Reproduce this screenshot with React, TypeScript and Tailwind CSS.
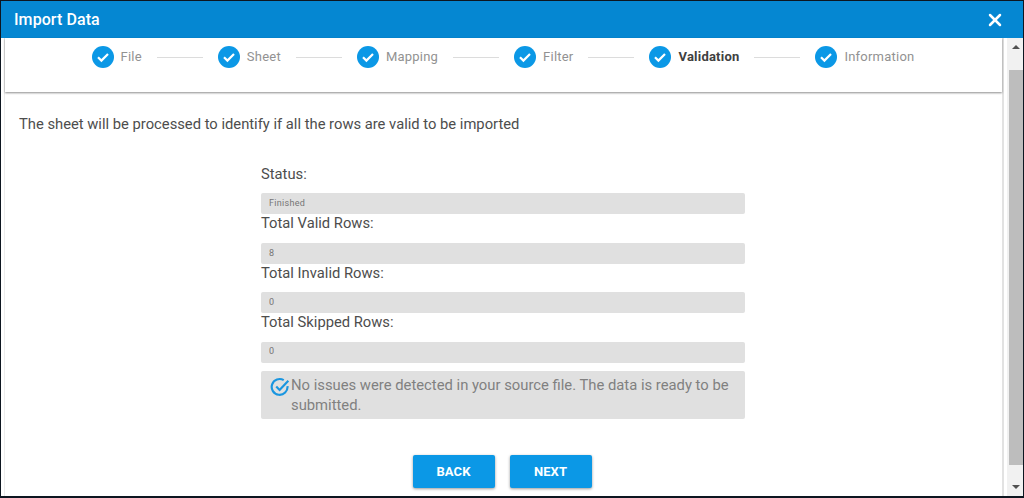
import React from "react";
import { X } from "lucide-react";

const steps = ["File", "Sheet", "Mapping", "Filter", "Validation", "Information"];

const fields = [
  { label: "Status:", value: "Finished" },
  { label: "Total Valid Rows:", value: "8" },
  { label: "Total Invalid Rows:", value: "0" },
  { label: "Total Skipped Rows:", value: "0" },
];

function StepIcon() {
  return (
    <svg viewBox="0 0 22 22" className="w-[22px] h-[22px] shrink-0">
      <circle cx="11" cy="11" r="11" fill="#0b98e6" />
      <path d="M6 11.3l3.4 3.3L16 8" fill="none" stroke="#fff" strokeWidth="2.2" />
    </svg>
  );
}

export default function App() {
  return (
    <div className="w-[1024px] h-[498px] bg-[#0d1620] pt-px pl-px pr-px pb-[2px] overflow-hidden font-['Roboto',sans-serif]">
      <div className="w-full h-full bg-white flex flex-col">
        <div className="h-[37px] shrink-0 bg-[#0587d2] text-white flex items-center justify-between pl-[13px] pr-[18px]">
          <span className="text-[16px] tracking-[0.08px] font-medium">Import Data</span>
          <X size={20} strokeWidth={3} />
        </div>
        <div className="flex flex-1 min-h-0 pl-[3px]">
          <div className="flex-1 min-w-0 flex flex-col border-l border-r-2 border-l-[#ececec] border-r-[#e2e2e2]">
            <div className="h-[54px] shrink-0 bg-white shadow-[0_1px_2px_rgba(0,0,0,0.45)] flex justify-center pt-[8px] pr-px">
              <div className="flex items-start">
                {steps.map((s, i) => (
                  <div key={s} className="flex items-center h-[22px]">
                    <StepIcon />
                    <span
                      className={
                        "ml-[7px] text-[13px] tracking-[0.22px] " +
                        (s === "Validation" ? "font-bold text-[#404040]" : "text-[#929292]")
                      }
                    >
                      {s}
                    </span>
                    {i < steps.length - 1 && (
                      <div className="w-[46px] h-px bg-[#dcdcdc] mx-[15px]" />
                    )}
                  </div>
                ))}
              </div>
            </div>
            <div className="flex-1 min-h-0 flex flex-col">
              <p className="pl-[14px] mt-[23px] text-[14.76px] leading-[18px] text-[#4d4d4d]">
                The sheet will be processed to identify if all the rows are valid to be imported
              </p>
              <div className="w-[484px] ml-[256px] mt-[32px]">
                {fields.map((f) => (
                  <div key={f.label}>
                    <div className="text-[14.76px] leading-[18.5px] text-[#4d4d4d]">{f.label}</div>
                    <div className="mt-[9.6px] h-[21.4px] bg-[#e0e0e0] rounded-[2px] pl-[8px] flex items-center text-[9px] tracking-[0.3px] text-[#757575]">
                      {f.value}
                    </div>
                  </div>
                ))}
                <div className="mt-[8px] h-[48px] bg-[#e0e0e0] rounded-[2px] flex pl-[9px] pt-[4px] pr-[14px]">
                  <svg viewBox="0 0 24 24" className="w-[20px] h-[20px] shrink-0 mt-[2px]" fill="none" stroke="#1a96e0" strokeWidth="2.6">
                    <path d="M21 11a9.5 9.5 0 1 1-4.5-7.2" />
                    <path d="M7.5 11.5l4 4L22 4.5" />
                  </svg>
                  <span className="pl-px text-[14.8px] leading-[20px] text-[#808080]">
                    No issues were detected in your source file. The data is ready to be submitted.
                  </span>
                </div>
                <div className="flex justify-center gap-[15px] mt-[36px] pr-[2px]">
                  <button className="w-[82px] h-[33px] bg-[#0b98e6] text-white text-[13px] tracking-[0.1px] font-bold rounded-[2px] shadow-[0_1px_3px_rgba(0,0,0,0.4)]">
                    BACK
                  </button>
                  <button className="w-[82px] h-[33px] bg-[#0b98e6] text-white text-[13px] tracking-[0.1px] font-bold rounded-[2px] shadow-[0_1px_3px_rgba(0,0,0,0.4)]">
                    NEXT
                  </button>
                </div>
              </div>
            </div>
          </div>
          <div className="ml-[3px] w-[16px] shrink-0 bg-[#f1f1f1] flex flex-col">
            <div className="h-[32px] flex justify-center pt-[7px] pl-[2px]">
              <div className="w-0 h-0 border-x-[4px] border-x-transparent border-b-[4px] border-b-[#505050]" />
            </div>
            <div className="flex-1 ml-[2px] bg-[#bdbdbd]" />
            <div className="h-[31px] flex justify-center items-end pb-[7px] pl-[2px]">
              <div className="w-0 h-0 border-x-[4px] border-x-transparent border-t-[4px] border-t-[#505050]" />
            </div>
          </div>
        </div>
      </div>
    </div>
  );
}
